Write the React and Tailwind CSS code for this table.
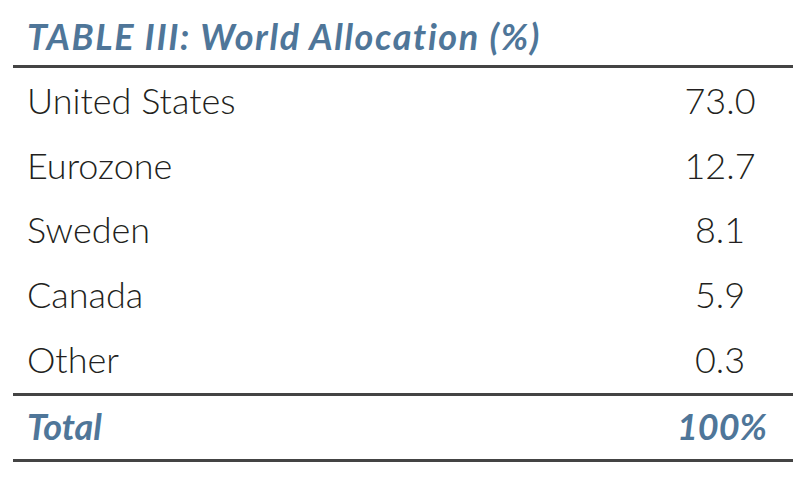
import React from 'react';

const rows = [
  ['United States', '73.0'],
  ['Eurozone', '12.7'],
  ['Sweden', '8.1'],
  ['Canada', '5.9'],
  ['Other', '0.3'],
];

export default function App() {
  return (
    <div className="w-[805px] h-[479px] bg-white font-['Lato',sans-serif] px-[13px]">
      <h1 className="pl-[14px] pt-[14px] h-[65px] text-[36px] font-bold italic tracking-[0.045em] text-[#4f7699] leading-[44px]">
        TABLE III: World Allocation (%)
      </h1>
      <div className="w-[780px] border-t-[3px] border-b-[3px] border-[#444] pt-[2px]">
        {rows.map(([label, value]) => (
          <div key={label} className="flex items-center h-[64.6px] pb-[4px] text-[36px] font-light text-[#231f20]">
            <span className="flex-1 pl-[14px]">{label}</span>
            <span className="w-[146px] text-center">{value}</span>
          </div>
        ))}
      </div>
      <div className="w-[780px] h-[66px] flex items-center pb-[2px] border-b-[3px] border-[#444] text-[36px] font-bold italic text-[#4f7699]">
        <span className="flex-1 pl-[14px]">Total</span>
        <span className="w-[146px] text-center pl-[4px]">100%</span>
      </div>
    </div>
  );
}
